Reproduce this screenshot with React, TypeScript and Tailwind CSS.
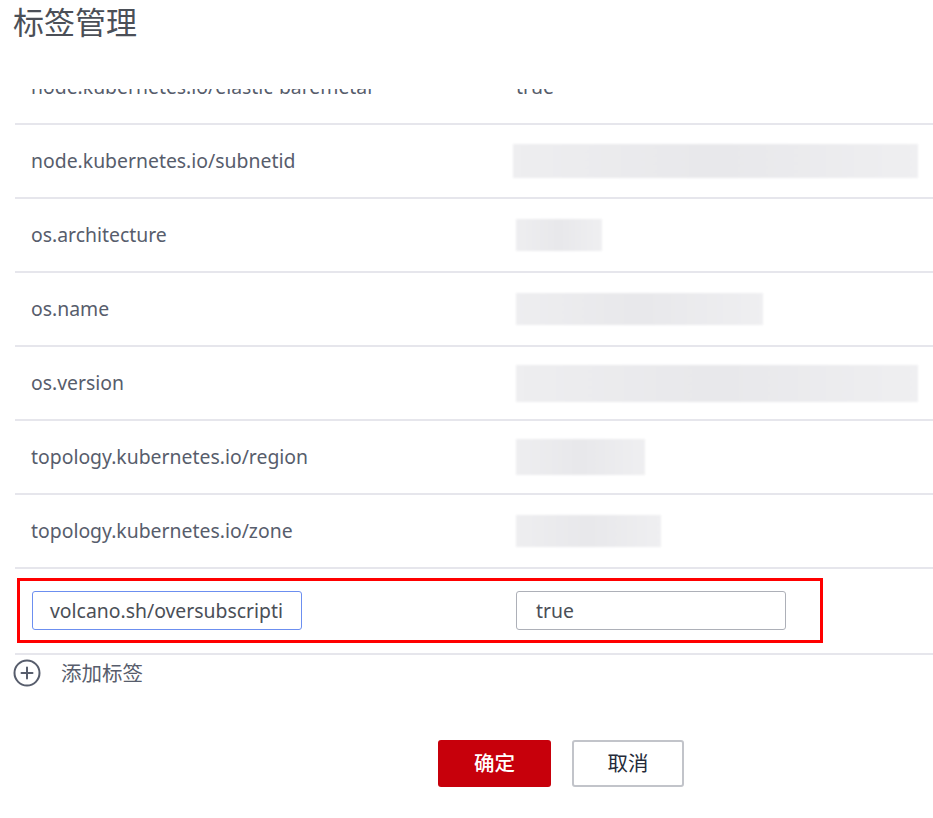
import React from 'react';

const rows = [
    { key: 'node.kubernetes.io/elastic-baremetal', value: 'true', blur: '' },
    { key: 'node.kubernetes.io/subnetid', value: '', blur: 'w-[405px] h-[34px] -ml-[3px]' },
    { key: 'os.architecture', value: '', blur: 'w-[86px] h-[32px]' },
    { key: 'os.name', value: '', blur: 'w-[247px] h-[32px]' },
    { key: 'os.version', value: '', blur: 'w-[402px] h-[37px]' },
    { key: 'topology.kubernetes.io/region', value: '', blur: 'w-[129px] h-[36px]' },
    { key: 'topology.kubernetes.io/zone', value: '', blur: 'w-[145px] h-[32px]' },
];

const PlusCircle = () => (
    <svg width="28" height="28" viewBox="0 0 28 28" fill="none">
        <circle cx="14" cy="14" r="12.5" stroke="#575d6c" strokeWidth="2" />
        <path d="M14 8.5v11M8.5 14h11" stroke="#575d6c" strokeWidth="2" strokeLinecap="round" />
    </svg>
);

const App = () => {
    return (
        <div
            className="w-[933px] h-[818px] bg-white overflow-hidden text-[#575d6c]"
            style={{ fontFamily: '"Noto Sans", "Noto Sans CJK SC", sans-serif' }}
        >
            <h1 className="pl-[13px] pt-[3px] h-[89px] text-[31px] leading-[38px] text-[#4b4f57] font-normal">
                标签管理
            </h1>

            {/* scrolled table, first row partly hidden */}
            <div className="ml-[15px] h-[480px] overflow-hidden">
                <div className="-mt-[38px]">
                    {rows.map((row) => (
                        <div
                            key={row.key}
                            className="grid grid-cols-[501px_1fr] items-center h-[74px] border-b-2 border-[#e6e6ec] text-[19.4px]"
                        >
                            <span className="pl-[16px]">{row.key}</span>
                            {row.value ? (
                                <span>{row.value}</span>
                            ) : (
                                <div
                                    className={`${row.blur} bg-gradient-to-r from-[#eeeef0] via-[#e8e8eb] to-[#efeff1] blur-[1px]`}
                                />
                            )}
                        </div>
                    ))}
                </div>
            </div>

            {/* editing row */}
            <div className="ml-[15px] h-[86px] pt-[9px] border-b-2 border-[#e6e6ec]">
                <div className="ml-[2px] w-[806px] h-[65px] border-[3px] border-[#ff0000] grid grid-cols-[496px_1fr] items-center">
                    <div className="pl-[12px]">
                        <div className="w-[270px] h-[39px] border border-[#6c8ff0] rounded-[3px] flex items-center pl-[17px] text-[19.4px] text-[#4b4f57]">
                            volcano.sh/oversubscripti
                        </div>
                    </div>
                    <div className="w-[270px] h-[39px] border border-[#adb0b8] rounded-[3px] flex items-center pl-[19px] text-[19.4px] text-[#4b4f57]">
                        true
                    </div>
                </div>
            </div>

            <div className="flex items-center gap-[20px] pl-[13px] mt-[3px] h-[30px] text-[20.5px]">
                <PlusCircle />
                <span>添加标签</span>
            </div>

            <div className="flex gap-[21px] mt-[52px] pl-[438px]">
                <button className="w-[113px] h-[47px] rounded-[3px] bg-[#c7000b] text-white text-[20.5px] font-medium">
                    确定
                </button>
                <button className="w-[112px] h-[47px] rounded-[3px] border-2 border-[#c2c4ca] bg-white text-[#252b3a] text-[20.5px]">
                    取消
                </button>
            </div>
        </div>
    );
};

export default App;
